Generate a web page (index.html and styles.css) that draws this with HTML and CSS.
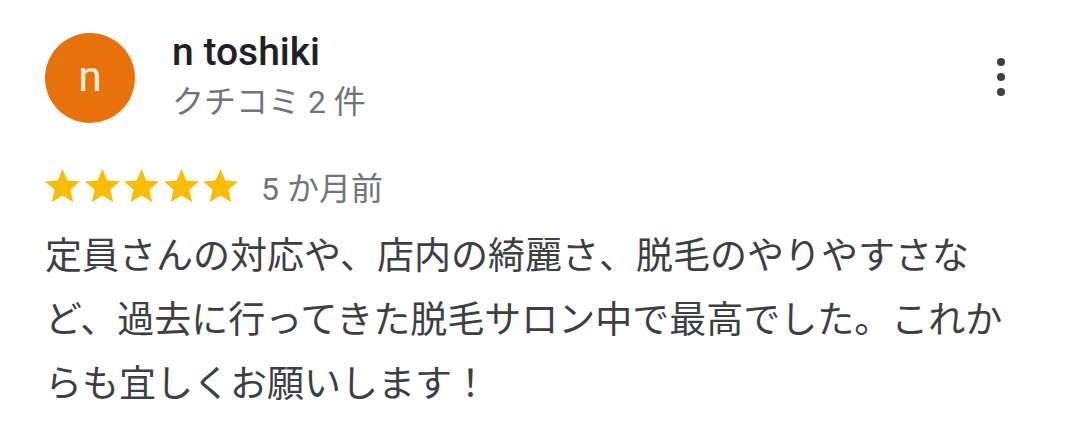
FILE: index.html
```html
<!DOCTYPE html>
<html lang="ja">
<head>
    <meta charset="UTF-8">
    <meta name="viewport" content="width=device-width, initial-scale=1.0">
    <title>クチコミ</title>
    <link rel="stylesheet" href="styles.css">
</head>
<body>
    <div class="review">
        <div class="review-header">
            <div class="avatar">n</div>
            <div class="author">
                <div class="author-name">n toshiki</div>
                <div class="author-meta">クチコミ 2 件</div>
            </div>
            <button class="more" aria-label="その他">
                <svg viewBox="0 0 8 40" width="8" height="40">
                    <circle cx="4" cy="4" r="4"/>
                    <circle cx="4" cy="19" r="4"/>
                    <circle cx="4" cy="34" r="4"/>
                </svg>
            </button>
        </div>

        <div class="rating">
            <div class="stars">
                <svg class="star" viewBox="2 2 20 19"><path d="M12 17.27L18.18 21l-1.64-7.03L22 9.24l-7.19-.61L12 2 9.19 8.63 2 9.24l5.46 4.73L5.82 21z"/></svg>
                <svg class="star" viewBox="2 2 20 19"><path d="M12 17.27L18.18 21l-1.64-7.03L22 9.24l-7.19-.61L12 2 9.19 8.63 2 9.24l5.46 4.73L5.82 21z"/></svg>
                <svg class="star" viewBox="2 2 20 19"><path d="M12 17.27L18.18 21l-1.64-7.03L22 9.24l-7.19-.61L12 2 9.19 8.63 2 9.24l5.46 4.73L5.82 21z"/></svg>
                <svg class="star" viewBox="2 2 20 19"><path d="M12 17.27L18.18 21l-1.64-7.03L22 9.24l-7.19-.61L12 2 9.19 8.63 2 9.24l5.46 4.73L5.82 21z"/></svg>
                <svg class="star" viewBox="2 2 20 19"><path d="M12 17.27L18.18 21l-1.64-7.03L22 9.24l-7.19-.61L12 2 9.19 8.63 2 9.24l5.46 4.73L5.82 21z"/></svg>
            </div>
            <span class="date">5 か月前</span>
        </div>

        <p class="review-text">定員さんの対応や、店内の綺麗さ、脱毛のやりやすさなど、過去に行ってきた脱毛サロン中で最高でした。これからも宜しくお願いします！</p>
    </div>
</body>
</html>
```

FILE: styles.css
```css
/* Основа */
body {
    margin: 0;
    background-color: #ffffff;
    font-family: Roboto, "Noto Sans CJK JP", sans-serif;
    color: #3c4043;
}

.review {
    width: 975px;
    padding: 33px 0 0 45px;
}

/* Шапка */
.review-header {
    display: flex;
    align-items: flex-start;
}

.avatar {
    width: 90px;
    height: 90px;
    border-radius: 50%;
    background-color: #e8710a;
    color: #fdf1e2;
    font-size: 42px;
    line-height: 88px;
    text-align: center;
    flex-shrink: 0;
}

.author {
    margin-left: 37px;
    flex: 1;
}

.author-name {
    font-size: 39px;
    font-weight: 500;
    color: #202124;
    line-height: 40px;
    margin-top: -1px;
}

.author-meta {
    font-size: 32px;
    color: #70757a;
    line-height: 40px;
    margin-top: 10px;
}

.more {
    background: none;
    border: none;
    padding: 0;
    margin: 25px 15px 0 0;
    fill: #3c4043;
    line-height: 0;
}

/* Оценка */
.rating {
    display: flex;
    align-items: center;
    margin-top: 39px;
}

.stars {
    display: flex;
    gap: 4.5px;
}

.star {
    width: 35px;
    height: 33px;
    fill: #fbbc04;
}

.date {
    font-size: 32px;
    color: #70757a;
    margin-left: 23px;
    position: relative;
    top: 1px;
}

/* Текст */
.review-text {
    margin: 17px 0 0 0;
    font-size: 37px;
    line-height: 64px;
}
```
